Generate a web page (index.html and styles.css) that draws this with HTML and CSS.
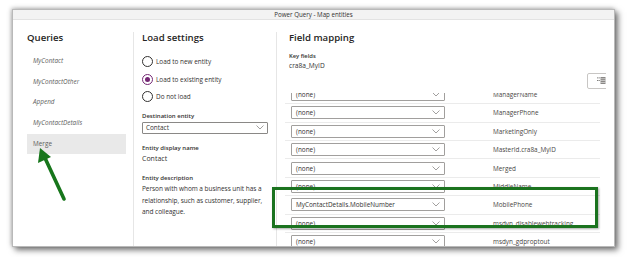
FILE: index.html
```html
<!DOCTYPE html>
<html>
<head>
	<meta charset="utf-8">
	<title>Power Query - Map entities</title>
	<link rel="stylesheet" href="styles.css">
</head>
<body>
	<div class="stage">
		<div class="window">
			<div class="titlebar">Power Query - Map entities</div>
			<div class="panes">
				<div class="pane queries">
					<h2>Queries</h2>
					<ul class="query-list">
						<li>MyContact</li>
						<li>MyContactOther</li>
						<li>Append</li>
						<li>MyContactDetails</li>
						<li class="selected">Merge</li>
					</ul>
				</div>
				<div class="pane settings">
					<h2>Load settings</h2>
					<div class="radio-group">
						<label class="radio"><span class="dot"></span>Load to new entity</label>
						<label class="radio checked"><span class="dot"></span>Load to existing entity</label>
						<label class="radio"><span class="dot"></span>Do not load</label>
					</div>
					<div class="field-label">Destination entity</div>
					<div class="select wide">
						<span>Contact</span>
						<svg width="8" height="5" viewBox="0 0 8 5"><polyline points="0.5,0.5 4,4 7.5,0.5" fill="none" stroke="#8a8886" stroke-width="0.8"/></svg>
					</div>
					<div class="field-label spaced">Entity display name</div>
					<div class="field-value">Contact</div>
					<div class="field-label spaced">Entity description</div>
					<div class="field-value desc">Person with whom a business unit has a relationship, such as customer, supplier, and colleague.</div>
				</div>
				<div class="pane mapping">
					<h2>Field mapping</h2>
					<div class="field-label key">Key fields</div>
					<div class="field-value small">cra8a_MyID</div>
					<div class="toolbar">
						<div class="tool-btn">
							<svg width="9" height="7" viewBox="0 0 9 7">
								<rect x="0" y="0.5" width="1.2" height="0.8" fill="#605e5c"/>
								<rect x="1.6" y="0.5" width="1.2" height="0.8" fill="#605e5c"/>
								<rect x="0" y="3" width="1.2" height="0.8" fill="#605e5c"/>
								<rect x="1.6" y="3" width="1.2" height="0.8" fill="#605e5c"/>
								<rect x="3.5" y="0" width="5" height="7" fill="#8a8886"/>
								<rect x="3.5" y="1.6" width="5" height="0.5" fill="#fff"/>
								<rect x="3.5" y="3.3" width="5" height="0.5" fill="#fff"/>
								<rect x="3.5" y="5" width="5" height="0.5" fill="#fff"/>
							</svg>
						</div>
					</div>
					<div class="map-list">
						<div class="map-rows">
							<div class="map-row"><div class="select"><span>(none)</span><svg width="8" height="5" viewBox="0 0 8 5"><polyline points="0.5,0.5 4,4 7.5,0.5" fill="none" stroke="#8a8886" stroke-width="0.8"/></svg></div><div class="target">ManagerName</div></div>
							<div class="map-row"><div class="select"><span>(none)</span><svg width="8" height="5" viewBox="0 0 8 5"><polyline points="0.5,0.5 4,4 7.5,0.5" fill="none" stroke="#8a8886" stroke-width="0.8"/></svg></div><div class="target">ManagerPhone</div></div>
							<div class="map-row"><div class="select"><span>(none)</span><svg width="8" height="5" viewBox="0 0 8 5"><polyline points="0.5,0.5 4,4 7.5,0.5" fill="none" stroke="#8a8886" stroke-width="0.8"/></svg></div><div class="target">MarketingOnly</div></div>
							<div class="map-row"><div class="select"><span>(none)</span><svg width="8" height="5" viewBox="0 0 8 5"><polyline points="0.5,0.5 4,4 7.5,0.5" fill="none" stroke="#8a8886" stroke-width="0.8"/></svg></div><div class="target">MasterId.cra8a_MyID</div></div>
							<div class="map-row"><div class="select"><span>(none)</span><svg width="8" height="5" viewBox="0 0 8 5"><polyline points="0.5,0.5 4,4 7.5,0.5" fill="none" stroke="#8a8886" stroke-width="0.8"/></svg></div><div class="target">Merged</div></div>
							<div class="map-row"><div class="select"><span>(none)</span><svg width="8" height="5" viewBox="0 0 8 5"><polyline points="0.5,0.5 4,4 7.5,0.5" fill="none" stroke="#8a8886" stroke-width="0.8"/></svg></div><div class="target">MiddleName</div></div>
							<div class="map-row"><div class="select"><span>MyContactDetails.MobileNumber</span><svg width="8" height="5" viewBox="0 0 8 5"><polyline points="0.5,0.5 4,4 7.5,0.5" fill="none" stroke="#8a8886" stroke-width="0.8"/></svg></div><div class="target">MobilePhone</div></div>
							<div class="map-row"><div class="select"><span>(none)</span><svg width="8" height="5" viewBox="0 0 8 5"><polyline points="0.5,0.5 4,4 7.5,0.5" fill="none" stroke="#8a8886" stroke-width="0.8"/></svg></div><div class="target">msdyn_disablewebtracking</div></div>
							<div class="map-row"><div class="select"><span>(none)</span><svg width="8" height="5" viewBox="0 0 8 5"><polyline points="0.5,0.5 4,4 7.5,0.5" fill="none" stroke="#8a8886" stroke-width="0.8"/></svg></div><div class="target">msdyn_gdproptout</div></div>
						</div>
					</div>
				</div>
			</div>
		</div>

		<!-- annotations drawn over the screenshot -->
		<div class="callout-box"></div>
		<svg class="callout-arrow" width="628" height="257" viewBox="0 0 628 257">
			<line x1="64" y1="199" x2="45" y2="158" stroke="#17761b" stroke-width="3.6" stroke-linecap="round"/>
			<polygon points="40,148 38,163 51,157" fill="#17761b"/>
		</svg>
	</div>
</body>
</html>
```

FILE: styles.css
```css
* {
	box-sizing: border-box;
}
body {
	margin: 0;
	background: #fff;
	font-family: "Open Sans", "Noto Sans", sans-serif;
	color: #323130;
}
.stage {
	position: relative;
	width: 628px;
	height: 257px;
	padding: 9px 0 0 12px;
	overflow: hidden;
}
.window {
	width: 603px;
	height: 238px;
	background: #fff;
	border: 1px solid #b9b9b9;
	box-shadow: -1px -1px 4px rgba(0, 0, 0, 0.25), 3px 3px 6px rgba(0, 0, 0, 0.55);
	display: flex;
	flex-direction: column;
	overflow: hidden;
}
.titlebar {
	height: 10px;
	background: #f3f3f3;
	border-bottom: 1px solid #e3e3e3;
	font-size: 6.2px;
	line-height: 9px;
	text-align: center;
	color: #323130;
}
.panes {
	flex: 1;
	display: flex;
	padding-top: 12px;
	min-height: 0;
}
.pane {
	border-right: 1px solid #e6e6e6;
}
.pane h2 {
	margin: 0;
	font-size: 9.6px;
	line-height: 12px;
	font-weight: 600;
	color: #252423;
}

/* queries */
.queries {
	width: 121px;
	padding: 0 7px 0 14px;
}
.query-list {
	list-style: none;
	margin: 7px 0 0;
	padding: 0;
}
.query-list li {
	height: 20.5px;
	line-height: 20.5px;
	padding-left: 6px;
	font-size: 6.4px;
	font-style: italic;
	color: #605e5c;
}
.query-list li.selected {
	background: #e9e9e9;
	font-style: normal;
	height: 20px;
	line-height: 20px;
	margin-top: 0.5px;
}

/* load settings */
.settings {
	width: 143px;
	padding: 0 6px 0 8px;
}
.radio-group {
	margin-top: 9px;
}
.radio {
	display: flex;
	align-items: center;
	height: 17.5px;
	font-size: 6.4px;
	color: #323130;
}
.radio .dot {
	width: 11px;
	height: 11px;
	border: 1px solid #323130;
	border-radius: 50%;
	margin-right: 3px;
	display: flex;
	align-items: center;
	justify-content: center;
}
.radio.checked .dot {
	border-color: #742774;
}
.radio.checked .dot::after {
	content: "";
	width: 5px;
	height: 5px;
	border-radius: 50%;
	background: #742774;
}
.field-label {
	font-size: 6px;
	font-weight: 600;
	line-height: 9px;
	color: #323130;
	margin-top: 6px;
}
.field-label.spaced {
	margin-top: 10px;
}
.field-value {
	font-size: 7px;
	line-height: 11.5px;
	color: #323130;
}
.field-value.desc {
	font-size: 6.5px;
	letter-spacing: -0.05px;
}
.select {
	height: 12px;
	border: 1px solid #8a8886;
	border-radius: 1px;
	display: flex;
	align-items: center;
	justify-content: space-between;
	padding: 0 3px 0 3px;
	font-size: 6.4px;
	color: #323130;
	background: #fff;
}
.select.wide {
	width: 126px;
	margin-top: 1px;
}

/* field mapping */
.mapping {
	flex: 1;
	border-right: none;
	padding: 0 14px 0 12px;
	display: flex;
	flex-direction: column;
	overflow: hidden;
	min-height: 0;
}
.field-label.key {
	margin-top: 7.5px;
	font-size: 5.8px;
}
.field-value.small {
	font-size: 6.6px;
	line-height: 10px;
}
.toolbar {
	display: flex;
	justify-content: flex-end;
	margin: 2px -6px 0 0;
	height: 16px;
	overflow: hidden;
}
.tool-btn {
	width: 25px;
	height: 16px;
	border: 1px solid #c8c6c4;
	border-radius: 2px;
	display: flex;
	align-items: center;
	padding-left: 9px;
	margin-right: -6px;
}
.map-list {
	flex: 1;
	margin: 4px 0 0 -4px;
	overflow: hidden;
	min-height: 0;
}
.map-rows {
	margin-top: -6.8px;
}
.map-row {
	height: 18.43px;
	border-bottom: 1px solid #ebebeb;
	display: flex;
	align-items: center;
	padding-left: 6px;
}
.map-row .select {
	width: 154px;
	height: 13px;
	border-color: #a19f9d;
	padding-left: 4px;
	padding-right: 4px;
}
.target {
	margin-left: 48px;
	font-size: 6.4px;
	color: #484644;
}

/* annotations */
.callout-box {
	position: absolute;
	left: 272px;
	top: 187px;
	width: 326px;
	height: 41px;
	border: 3px solid #1b731f;
	box-shadow: 1px 1px 2px rgba(0, 0, 0, 0.35);
}
.callout-arrow {
	position: absolute;
	left: 0;
	top: 0;
	pointer-events: none;
}
```
